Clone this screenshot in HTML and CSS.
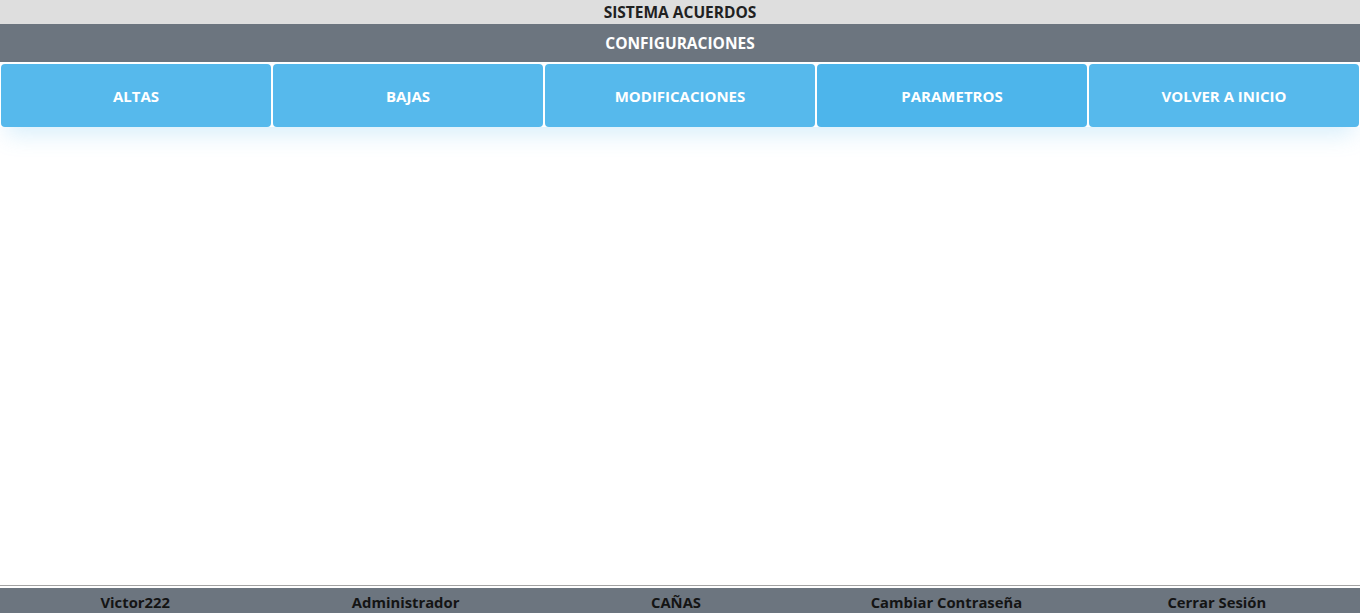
FILE: index.html
```html
<!DOCTYPE html>
<html lang="es">
<head>
<meta charset="utf-8">
<title>Sistema Acuerdos</title>
<link rel="stylesheet" href="styles.css">
</head>
<body>
<div class="page">
  <header class="title-bar">SISTEMA ACUERDOS</header>
  <div class="section-bar">CONFIGURACIONES</div>
  <nav class="menu">
    <a class="menu-btn">ALTAS</a>
    <a class="menu-btn">BAJAS</a>
    <a class="menu-btn">MODIFICACIONES</a>
    <a class="menu-btn menu-btn-active">PARAMETROS</a>
    <a class="menu-btn">VOLVER A INICIO</a>
  </nav>
  <main class="content"></main>
  <div class="footer-wrap">
    <footer class="footer">
      <span class="footer-item">Victor222</span>
      <span class="footer-item">Administrador</span>
      <span class="footer-item">CAÑAS</span>
      <span class="footer-item">Cambiar Contraseña</span>
      <span class="footer-item">Cerrar Sesión</span>
    </footer>
  </div>
</div>
</body>
</html>
```
FILE: styles.css
```css
* { box-sizing: border-box; }
html, body { margin: 0; padding: 0; height: 100%; overflow: hidden; }
body {
  font-family: "Open Sans", "Noto Sans", sans-serif;
  font-weight: 600;
  background: #fff;
}
.page {
  display: flex;
  flex-direction: column;
  height: 613px;
}
.title-bar {
  height: 24px;
  flex: none;
  background: #dedede;
  color: #212121;
  font-size: 15.5px;
  font-weight: 700;
  display: flex;
  align-items: center;
  justify-content: center;
}
.section-bar {
  height: 38px;
  flex: none;
  background: #6c757f;
  color: #fff;
  font-size: 15.5px;
  font-weight: 700;
  display: flex;
  align-items: center;
  justify-content: center;
}
.menu {
  flex: none;
  display: grid;
  grid-template-columns: repeat(5, 1fr);
  gap: 2px;
  padding: 2px 1px 0 1px;
  box-shadow: 0 14px 22px -6px rgba(80, 180, 235, 0.22);
}
.menu-btn {
  height: 63px;
  background: #56b9ec;
  border-radius: 4px;
  color: #fff;
  font-size: 15px;
  font-weight: 700;
  display: flex;
  align-items: center;
  justify-content: center;
  text-decoration: none;
  cursor: pointer;
}
.menu-btn-active { background: #4db5eb; }
.content { flex: 1; }
.footer-wrap {
  flex: none;
  height: 28px;
  border-top: 1px solid #a3a3a3;
  padding-top: 2px;
}
.footer {
  height: 25px;
  background: #6c757f;
  display: grid;
  grid-template-columns: repeat(5, 1fr);
  align-items: center;
  padding: 2px 8px 0 0;
}
.footer-item {
  text-align: center;
  color: #141414;
  font-size: 14.8px;
  font-weight: 700;
}
```
